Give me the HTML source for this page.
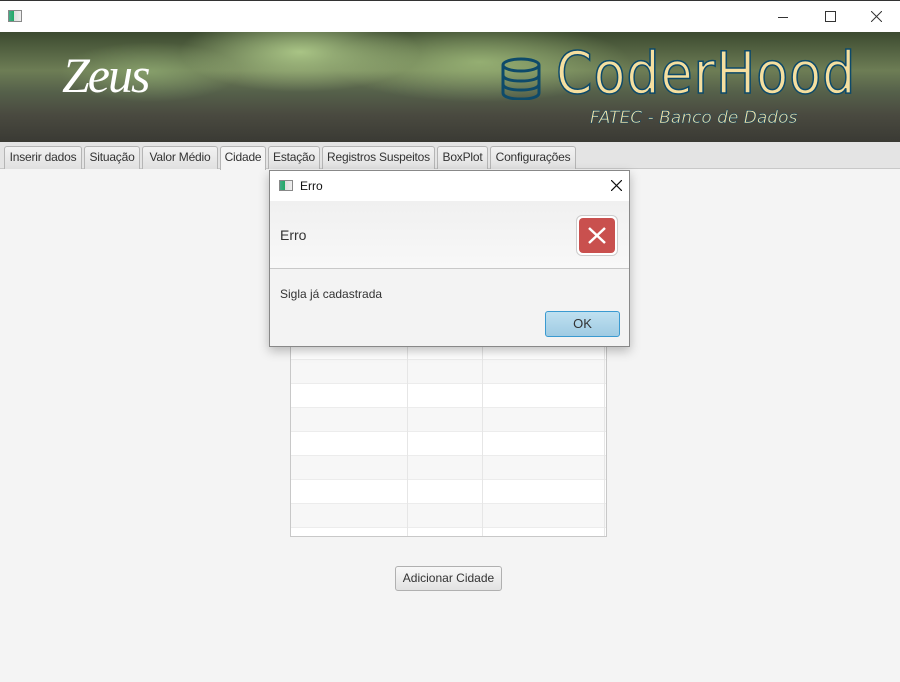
<!DOCTYPE html>
<html><head><meta charset="utf-8"><style>
*{margin:0;padding:0;box-sizing:border-box}
body{width:900px;height:682px;background:#f4f4f4;font-family:"Liberation Sans",sans-serif;position:relative;overflow:hidden;font-size:12px;color:#333}
.tb{position:absolute;left:0;top:0;width:900px;height:32px;background:#fff;border-top:1px solid #333}
.banner{position:absolute;left:0;top:32px;width:900px;height:110px;overflow:hidden;
background:radial-gradient(ellipse 120px 40px at 300px 20px,rgba(190,220,150,.8),transparent),radial-gradient(ellipse 150px 40px at 480px 30px,rgba(170,200,130,.7),transparent),radial-gradient(ellipse 90px 30px at 150px 40px,rgba(150,180,120,.6),transparent),linear-gradient(#3c4a30 0%,#6d7d55 35%,#55604a 55%,#4a4a40 75%,#3a3a34 100%)}
.tabs{position:absolute;left:0;top:142px;width:900px;height:27px;background:#e4e4e4;border-bottom:1px solid #c8c8c8}
.tab{position:absolute;top:4px;height:23px;border:1px solid #b5b5b5;border-bottom:none;background:linear-gradient(#f2f2f2,#e0e0e0);font-size:12px;line-height:21px;text-align:center;color:#333;border-radius:3px 3px 0 0;letter-spacing:-0.2px}
.tab.sel{background:#f4f4f4;height:24px}
.table{position:absolute;left:290px;top:176px;width:317px;height:361px;border:1px solid #c8c8c8;background:#fff;overflow:hidden}
.row{position:absolute;left:0;width:315px;height:24px;border-bottom:1px solid #ececec}
.s{background:#f7f7f7}
.vl{position:absolute;top:0;bottom:0;width:1px;background:#e6e6e6}
.btn{position:absolute;left:395px;top:566px;width:107px;height:25px;border:1px solid #b0b0b0;border-radius:3px;background:linear-gradient(#f8f8f8,#e2e2e2);font-size:12px;text-align:center;line-height:23px;color:#333}
.dlg{position:absolute;left:269px;top:170px;width:361px;height:177px;border:1px solid #888;background:#f3f3f3;box-shadow:0 4px 10px rgba(0,0,0,.25)}
</style></head><body>
<div class="tb">
<div style="position:absolute;left:8px;top:9px;width:14px;height:12px;border:1px solid #888;background:linear-gradient(90deg,#4a8 0,#2a6 40%,#ddd 40%,#eee)"></div>
<div style="position:absolute;left:778px;top:16px;width:10px;height:1px;background:#333"></div>
<div style="position:absolute;left:825px;top:10px;width:11px;height:11px;border:1px solid #333"></div>
<svg style="position:absolute;left:871px;top:10px" width="11" height="11"><path d="M0 0L11 11M11 0L0 11" stroke="#333" stroke-width="1"/></svg>
</div>
<div class="banner">
<div style="position:absolute;left:62px;top:14px;font-family:'Liberation Serif',serif;font-style:italic;font-size:50px;color:#fff;letter-spacing:-2px">Zeus</div>
<svg style="position:absolute;left:500px;top:24px" width="44" height="44" viewBox="0 0 44 44"><g fill="none" stroke="#0d4a6a" stroke-width="3"><ellipse cx="21" cy="9" rx="18" ry="6"/><path d="M3 9v28c0 4 8 6 18 6s18-2 18-6V9M3 19c0 4 8 6 18 6s18-2 18-6M3 28c0 4 8 6 18 6s18-2 18-6"/></g></svg>
<div style="position:absolute;left:556px;top:6px;font-family:'DejaVu Sans Condensed','DejaVu Sans',sans-serif;font-size:58px;color:#f5dfa0;-webkit-text-stroke:1.5px #0d4a6a;letter-spacing:1px;line-height:70px">CoderHood</div>
<div style="position:absolute;left:590px;top:76px;font-family:'DejaVu Sans',sans-serif;font-style:italic;font-size:17px;color:#f5dfa0;-webkit-text-stroke:.5px #0d4a6a">FATEC - Banco de Dados</div>
</div>
<div class="tabs">
<div class="tab" style="left:4px;width:78px">Inserir dados</div>
<div class="tab" style="left:84px;width:56px">Situação</div>
<div class="tab" style="left:142px;width:76px">Valor Médio</div>
<div class="tab sel" style="left:220px;width:46px">Cidade</div>
<div class="tab" style="left:268px;width:52px">Estação</div>
<div class="tab" style="left:322px;width:113px">Registros Suspeitos</div>
<div class="tab" style="left:437px;width:51px">BoxPlot</div>
<div class="tab" style="left:490px;width:86px">Configurações</div>
</div>
<div class="table">
<div class="row" style="top:15px"></div>
<div class="row s" style="top:39px"></div>
<div class="row" style="top:63px"></div>
<div class="row s" style="top:87px"></div>
<div class="row" style="top:111px"></div>
<div class="row s" style="top:135px"></div>
<div class="row" style="top:159px"></div>
<div class="row s" style="top:183px"></div>
<div class="row" style="top:207px"></div>
<div class="row s" style="top:231px"></div>
<div class="row" style="top:255px"></div>
<div class="row s" style="top:279px"></div>
<div class="row" style="top:303px"></div>
<div class="row s" style="top:327px"></div>
<div class="row" style="top:351px"></div>
<div class="vl" style="left:116px"></div><div class="vl" style="left:191px"></div><div class="vl" style="left:313px"></div>
</div>
<div class="btn">Adicionar Cidade</div>
<div class="dlg">
<div style="position:absolute;left:0;top:0;width:359px;height:30px;background:#fff">
<div style="position:absolute;left:9px;top:9px;width:14px;height:11px;border:1px solid #888;background:linear-gradient(90deg,#4a8 0,#2a6 40%,#ddd 40%,#eee)"></div>
<div style="position:absolute;left:30px;top:8px;font-size:12px;color:#111">Erro</div>
<svg style="position:absolute;left:341px;top:9px" width="11" height="11"><path d="M0 0L11 11M11 0L0 11" stroke="#111" stroke-width="1.2"/></svg>
</div>
<div style="position:absolute;left:0;top:30px;width:359px;height:68px;background:linear-gradient(#f0f0f0,#f8f8f8);border-bottom:1px solid #c8c8c8">
<div style="position:absolute;left:10px;top:26px;font-size:14px;color:#333">Erro</div>
<div style="position:absolute;left:306px;top:14px;width:42px;height:41px;border:1px solid #ccc;border-radius:6px;background:#fff;padding:2px"><div style="width:36px;height:35px;background:#c9504e;border-radius:4px;position:relative"><svg style="position:absolute;left:9px;top:9px" width="18" height="17"><path d="M1 1L17 16M17 1L1 16" stroke="#fff" stroke-width="2.5"/></svg></div></div>
</div>
<div style="position:absolute;left:10px;top:116px;font-size:12px">Sigla já cadastrada</div>
<div style="position:absolute;left:275px;top:140px;width:75px;height:26px;border:1px solid #3a9ad0;border-radius:3px;background:linear-gradient(#bfe0f0,#9fcbe3);text-align:center;line-height:24px;font-size:13px;color:#333">OK</div>
</div>
</body></html>
